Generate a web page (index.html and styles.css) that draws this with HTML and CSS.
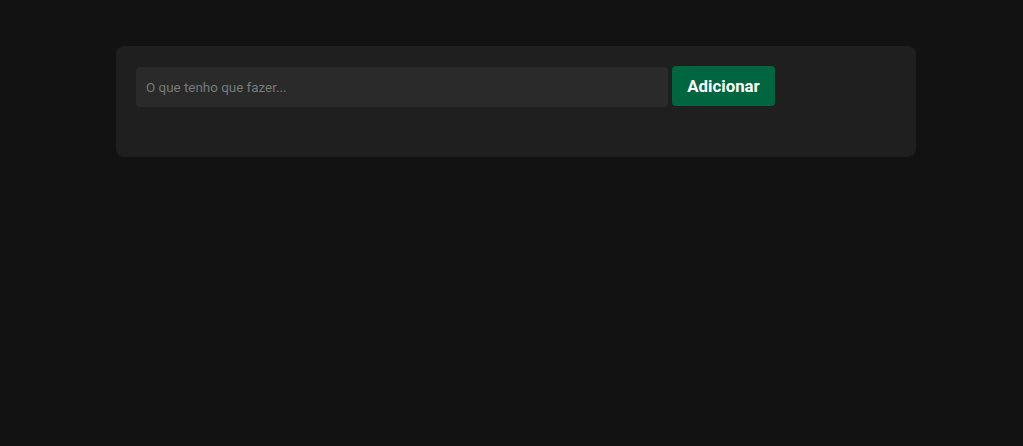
FILE: index.html
```html
<!DOCTYPE html>
<html lang="pt">
<head>
<meta charset="utf-8">
<title>Tarefas</title>
<link rel="stylesheet" href="styles.css">
</head>
<body>
<main class="card">
  <form class="add-form">
    <input class="task-input" type="text" placeholder="O que tenho que fazer...">
    <button class="add-btn" type="button">Adicionar</button>
  </form>
</main>
</body>
</html>
```
FILE: styles.css
```css
html, body {
  background: #121212;
  height: 100%;
}
body {
  margin: 0;
  padding: 46px 0 0 9px;
  box-sizing: border-box;
  font-family: Roboto, sans-serif;
}
.card {
  width: 800px;
  margin: 0 auto;
  background: #1f1f1f;
  border-radius: 8px;
  padding: 20px 20px 50px;
  box-sizing: border-box;
  height: 111px;
}
.add-form {
  display: flex;
  align-items: flex-start;
  gap: 4px;
}
.task-input {
  width: 532px;
  height: 40px;
  margin-top: 1px;
  box-sizing: border-box;
  border: none;
  outline: none;
  border-radius: 4px;
  background: #2a2a2a;
  padding: 0 10px;
  color: #ddd;
  font-family: Roboto, sans-serif;
  font-size: 13.4px;
}
.task-input::placeholder {
  color: #767b7b;
}
.add-btn {
  width: 103px;
  height: 40px;
  border: none;
  border-radius: 4px;
  background: #00663f;
  color: #fff;
  font-family: Roboto, sans-serif;
  font-weight: 700;
  font-size: 16.8px;
  padding: 0;
  cursor: pointer;
}
```
